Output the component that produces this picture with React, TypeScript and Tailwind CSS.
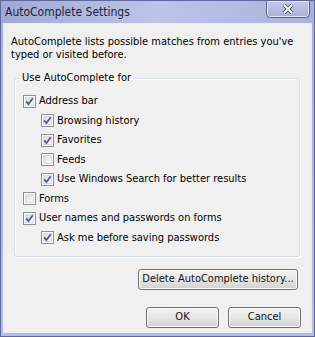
import React from 'react';

const font = { fontFamily: '"DejaVu Sans Condensed", "Liberation Sans", sans-serif' };

function Check({ checked }: { checked: boolean }) {
  return (
    <span className="relative inline-flex h-[13px] w-[13px] shrink-0 items-center justify-center border border-[#8f8f8f] bg-white">
      <span className="absolute inset-[1px] border border-[#dcdcdc] bg-gradient-to-br from-[#dcdcdc] to-[#fbfbfb]" />
      {checked && (
        <svg viewBox="0 0 11 11" className="relative h-[11px] w-[11px]">
          <path d="M2.2 5.4 L4.4 8 L8.8 2.2" fill="none" stroke="#4a5f97" strokeWidth="1.8" />
        </svg>
      )}
    </span>
  );
}

function Row({ label, checked, indent }: { label: string; checked: boolean; indent?: boolean }) {
  return (
    <div className={`flex h-[19.5px] items-center gap-[3px] ${indent ? 'pl-[26px]' : 'pl-[8px]'}`}>
      <Check checked={checked} />
      <span>{label}</span>
    </div>
  );
}

function Btn({ children, className }: { children: React.ReactNode; className: string }) {
  return (
    <button
      className={`h-[21px] rounded-[3px] border border-[#707070] bg-gradient-to-b from-[#f2f2f2] via-[#e6e6e6] to-[#d0d0d0] text-[#111] shadow-[inset_0_0_0_1px_#fcfcfc] ${className}`}
    >
      {children}
    </button>
  );
}

export default function App() {
  return (
    <div
      className="flex h-[337px] w-[315px] flex-col border border-[#5f679c] bg-gradient-to-b from-[#a7b0d9] to-[#b4bde3] text-[11px] text-black"
      style={font}
    >
      <div className="relative flex h-[22px] shrink-0 items-center bg-gradient-to-r from-[#a0a9d3] via-[#bcc5e8] to-[#a9b2da] pl-[4px]">
        <span className="text-[12px] text-[#1d2240]">AutoComplete Settings</span>
        <div className="absolute right-[4px] top-[-1px] flex h-[18px] w-[44px] items-center justify-center rounded-b-[4px] border border-[#5c6391] bg-gradient-to-b from-[#c3cae8] to-[#a9b1d9] shadow-[inset_0_0_0_1px_#dfe3f4]">
          <svg viewBox="0 0 12 10" className="h-[10px] w-[12px]">
            <path d="M2 1 L10 9 M10 1 L2 9" stroke="#3a3f60" strokeWidth="3.6" />
            <path d="M2 1 L10 9 M10 1 L2 9" stroke="#ffffff" strokeWidth="2" />
          </svg>
        </div>
      </div>
      <div className="mx-[2px] mb-[3px] flex flex-1 flex-col border border-[#e9ecf7] bg-[#f0f0f0] px-[7px] pt-[11px]">
        <p className="leading-[13px]">
          AutoComplete lists possible matches from entries you've typed or visited before.
        </p>
        <fieldset className="mt-[9px] ml-[3px] mr-[4px] h-[187px] rounded-[3px] border border-[#d5dfe5] px-0 pb-0 shadow-[inset_1px_1px_0_#fff,1px_1px_0_#fff]">
          <legend className="ml-[4px] px-[3px]">Use AutoComplete for</legend>
          <div className="mt-[5px]">
            <Row label="Address bar" checked />
            <Row label="Browsing history" checked indent />
            <Row label="Favorites" checked indent />
            <Row label="Feeds" checked={false} indent />
            <Row label="Use Windows Search for better results" checked indent />
            <Row label="Forms" checked={false} />
            <Row label="User names and passwords on forms" checked />
            <Row label="Ask me before saving passwords" checked indent />
          </div>
        </fieldset>
        <div className="mt-[12px] flex justify-end pr-[6px]">
          <Btn className="w-[160px]">Delete AutoComplete history...</Btn>
        </div>
        <div className="mt-[17px] flex justify-end gap-[9px] pr-[3px]">
          <Btn className="w-[73px]">OK</Btn>
          <Btn className="w-[73px]">Cancel</Btn>
        </div>
      </div>
    </div>
  );
}
